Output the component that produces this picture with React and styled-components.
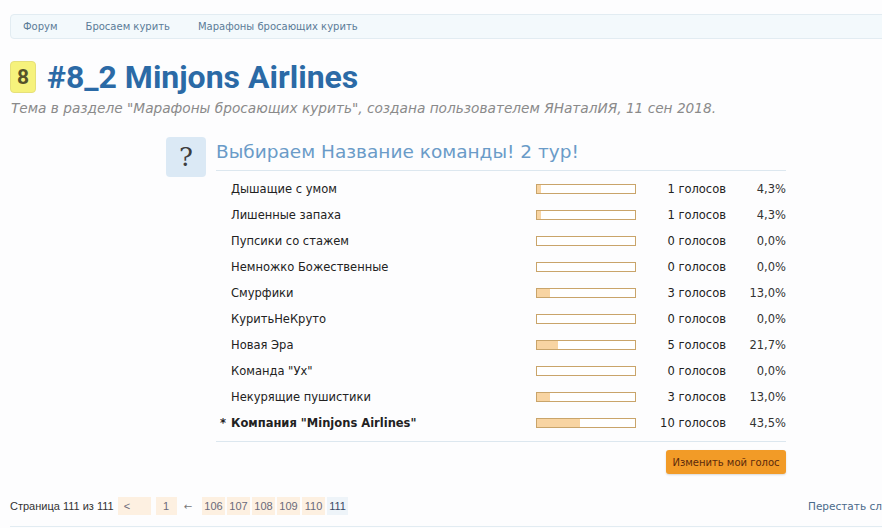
import React from "react";
import styled, { createGlobalStyle } from "styled-components";

const GlobalStyle = createGlobalStyle`
  html, body {
    margin: 0;
    padding: 0;
    background: #fdfdfe;
    overflow: hidden;
  }
  body {
    font-family: "DejaVu Sans", Verdana, sans-serif;
  }
`;

const Page = styled.div`
  width: 940px;
  padding: 14px 0 0 10px;
  box-sizing: border-box;
`;

const Breadcrumbs = styled.nav`
  display: flex;
  align-items: center;
  height: 25px;
  box-sizing: border-box;
  padding-left: 12px;
  gap: 28px;
  background: #f3f9fc;
  border: 1px solid #e2ecf2;
  border-radius: 4px 0 0 4px;
`;

const Crumb = styled.a`
  font-size: 10px;
  color: #5b7c98;
  text-decoration: none;
`;

const TitleBar = styled.div`
  display: flex;
  align-items: center;
  gap: 11px;
  margin-top: 19px;
`;

const Badge = styled.span`
  display: flex;
  align-items: center;
  justify-content: center;
  width: 26px;
  height: 32px;
  box-sizing: border-box;
  background: #f6f27c;
  border: 1px solid #e6e07a;
  border-radius: 4px;
  font-family: "Roboto", sans-serif;
  font-weight: 700;
  font-size: 21px;
  color: #55522a;
`;

const Title = styled.h1`
  margin: 0;
  font-family: "Roboto", sans-serif;
  font-weight: 700;
  font-size: 32px;
  line-height: 38px;
  color: #2b6aa6;
`;

const Subtitle = styled.p`
  margin: 4px 0 0 1px;
  font-size: 13.7px;
  font-style: italic;
  color: #8a8a8a;
`;

const Poll = styled.section`
  display: flex;
  gap: 10px;
  margin: 21px 0 0 156px;
`;

const QuestionBox = styled.div`
  width: 40px;
  height: 40px;
  flex: none;
  display: flex;
  align-items: center;
  justify-content: center;
  background: #dbe9f5;
  border-radius: 4px;
  font-family: "DejaVu Serif", serif;
  font-size: 26px;
  color: #3d3d3d;
`;

const PollBody = styled.div`
  width: 570px;
`;

const PollTitle = styled.h2`
  margin: 0;
  padding: 4px 0 8px;
  font-weight: 400;
  font-size: 18.5px;
  color: #6a9bc8;
  border-bottom: 1px solid #dce7ef;
`;

const Rows = styled.ul`
  list-style: none;
  margin: 0;
  padding: 5px 0 5px;
  border-bottom: 1px solid #dce7ef;
`;

const Row = styled.li`
  display: grid;
  grid-template-columns: 15px 305px 100px 90px 60px;
  align-items: center;
  height: 26px;
  font-size: 11.5px;
  color: #222;
  font-weight: ${(p) => (p.$mine ? 700 : 400)};
`;

const Mark = styled.span`
  padding-left: 4px;
  font-weight: 700;
`;

const Bar = styled.div`
  height: 10px;
  box-sizing: border-box;
  border: 1px solid #c9a46a;
  background: #fff;
`;

const BarFill = styled.div`
  height: 100%;
  background: #f8d4a2;
`;

const Votes = styled.span`
  text-align: right;
  font-weight: 400;
`;

const Percent = styled.span`
  text-align: right;
  font-weight: 400;
  color: #333;
`;

const PollFooter = styled.div`
  display: flex;
  justify-content: flex-end;
  padding-top: 8px;
`;

const VoteButton = styled.button`
  height: 24px;
  width: 120px;
  padding: 0;
  border: none;
  border-radius: 3px;
  background: #f29b27;
  box-shadow: 0 1px 2px rgba(0, 0, 0, 0.15);
  font-family: "DejaVu Sans", sans-serif;
  font-size: 10px;
  color: #5c2a0c;
`;

const BottomBar = styled.div`
  display: grid;
  grid-template-columns: 798px auto;
  align-items: center;
  margin-top: 23px;
  padding-bottom: 11px;
  border-bottom: 1px solid #e2ecf2;
`;

const Pager = styled.div`
  display: flex;
  align-items: center;
  gap: 2px;
  font-family: "Liberation Sans", Arial, sans-serif;
  font-size: 11px;
  color: #333;
`;

const PagerLabel = styled.span`
  margin-right: 2px;
`;

const PageLink = styled.a`
  display: flex;
  align-items: center;
  justify-content: ${(p) => (p.$wide ? "flex-start" : "center")};
  height: 18px;
  width: ${(p) => p.$w || 23}px;
  box-sizing: border-box;
  padding: 0 ${(p) => (p.$wide ? "6px" : "0")};
  background: ${(p) => (p.$current ? "#eef4f9" : "#fdf0e1")};
  color: ${(p) => (p.$current ? "#3a4a66" : "#6a6a7a")};
  text-decoration: none;
  margin-right: ${(p) => (p.$gap ? "3px" : "0")};
`;

const Arrow = styled.span`
  margin: 0 8px 0 5px;
  font-family: "DejaVu Sans", sans-serif;
  font-size: 10px;
  color: #777;
`;

const Unwatch = styled.a`
  font-size: 10.5px;
  color: #4a6a8a;
  white-space: nowrap;
`;

const options = [
  { name: "Дышащие с умом", votes: 1, pct: "4,3" },
  { name: "Лишенные запаха", votes: 1, pct: "4,3" },
  { name: "Пупсики со стажем", votes: 0, pct: "0,0" },
  { name: "Немножко Божественные", votes: 0, pct: "0,0" },
  { name: "Смурфики", votes: 3, pct: "13,0" },
  { name: "КуритьНеКруто", votes: 0, pct: "0,0" },
  { name: "Новая Эра", votes: 5, pct: "21,7" },
  { name: "Команда \"Ух\"", votes: 0, pct: "0,0" },
  { name: "Некурящие пушистики", votes: 3, pct: "13,0" },
  { name: "Компания \"Minjons Airlines\"", votes: 10, pct: "43,5", mine: true },
];

const pages = ["106", "107", "108", "109", "110"];

export default function App() {
  return (
    <>
      <GlobalStyle />
      <Page>
        <Breadcrumbs>
          <Crumb>Форум</Crumb>
          <Crumb>Бросаем курить</Crumb>
          <Crumb>Марафоны бросающих курить</Crumb>
        </Breadcrumbs>

        <TitleBar>
          <Badge>8</Badge>
          <Title>#8_2 Minjons Airlines</Title>
        </TitleBar>
        <Subtitle>
          Тема в разделе "Марафоны бросающих курить", создана пользователем ЯНаталИЯ, 11 сен 2018.
        </Subtitle>

        <Poll>
          <QuestionBox>?</QuestionBox>
          <PollBody>
            <PollTitle>Выбираем Название команды! 2 тур!</PollTitle>
            <Rows>
              {options.map((o) => (
                <Row key={o.name} $mine={o.mine}>
                  <Mark>{o.mine ? "*" : ""}</Mark>
                  <span>{o.name}</span>
                  <Bar>
                    <BarFill style={{ width: o.pct.replace(",", ".") + "%" }} />
                  </Bar>
                  <Votes>{o.votes} голосов</Votes>
                  <Percent>{o.pct}%</Percent>
                </Row>
              ))}
            </Rows>
            <PollFooter>
              <VoteButton>Изменить мой голос</VoteButton>
            </PollFooter>
          </PollBody>
        </Poll>

        <BottomBar>
          <Pager>
            <PagerLabel>Страница 111 из 111</PagerLabel>
            <PageLink $wide $gap $w={33}>&lt;</PageLink>
            <PageLink $w={21}>1</PageLink>
            <Arrow>←</Arrow>
            {pages.map((p) => (
              <PageLink key={p}>{p}</PageLink>
            ))}
            <PageLink $current $w={21}>111</PageLink>
          </Pager>
          <Unwatch>Перестать следить за темой</Unwatch>
        </BottomBar>
      </Page>
    </>
  );
}
